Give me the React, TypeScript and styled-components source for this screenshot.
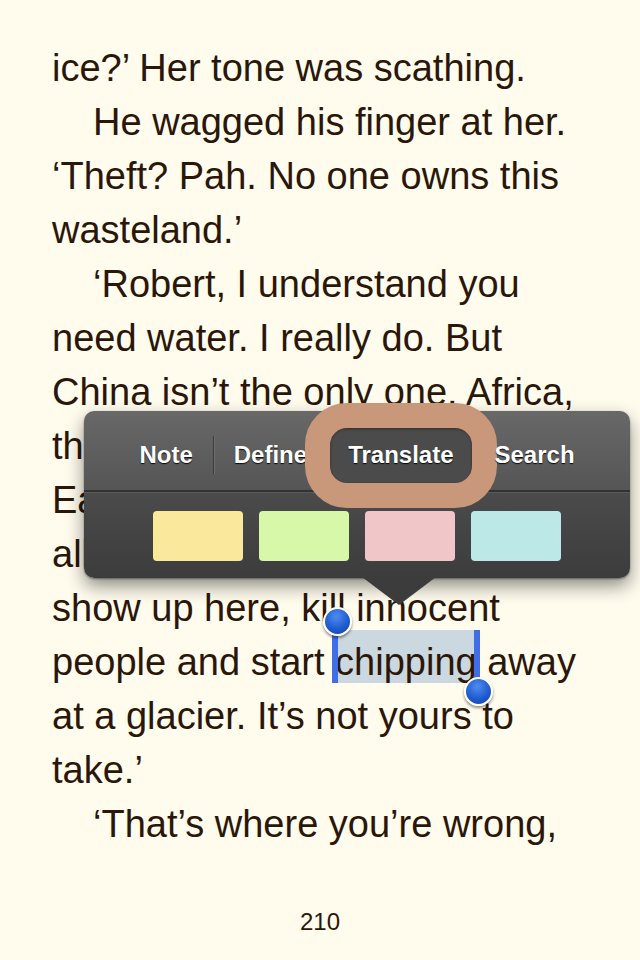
import React from "react";
import styled, { createGlobalStyle } from "styled-components";

const lines = [
    { text: "ice?’ Her tone was scathing." },
    { text: "He wagged his finger at her.", indent: true },
    { text: "‘Theft? Pah. No one owns this" },
    { text: "wasteland.’" },
    { text: "‘Robert, I understand you", indent: true },
    { text: "need water. I really do. But" },
    { text: "China isn’t the only one. Africa," },
    { text: "the subcontinent, the Middle" },
    { text: "East. They all need water. They" },
    { text: "all don’t simply march in and" },
    { text: "show up here, kill innocent" },
    { text: "SELECTION" },
    { text: "at a glacier. It’s not yours to" },
    { text: "take.’" },
    { text: "‘That’s where you’re wrong,", indent: true },
];

const menu = ["Note", "Define", "Translate", "Search"];
const swatches = ["#fae89c", "#d6f8a8", "#f1c6c8", "#bde8e8"];

export default function App() {
    return (
        <>
            <GlobalStyle />
            <StyledPage>
                <StyledText>
                    {lines.map((line, i) =>
                        line.text === "SELECTION" ? (
                            <StyledLine key={i}>
                                people and start{" "}
                                <StyledSelected>
                                    <StyledCaret side="left" />
                                    chipping
                                    <StyledCaret side="right" />
                                </StyledSelected>{" "}
                                away
                            </StyledLine>
                        ) : (
                            <StyledLine key={i} indent={line.indent}>
                                {line.text}
                            </StyledLine>
                        )
                    )}
                </StyledText>

                <StyledPageNumber>210</StyledPageNumber>

                <StyledPopover>
                    <StyledMenuRow>
                        {menu.map((item, i) => (
                            <React.Fragment key={item}>
                                {i > 0 && <StyledSeparator />}
                                <StyledMenuItem active={item === "Translate"}>
                                    {item}
                                    {item === "Translate" && <StyledRing />}
                                </StyledMenuItem>
                            </React.Fragment>
                        ))}
                    </StyledMenuRow>
                    <StyledSwatchRow>
                        {swatches.map(c => (
                            <StyledSwatch key={c} color={c} />
                        ))}
                    </StyledSwatchRow>
                </StyledPopover>
            </StyledPage>
        </>
    );
}

const GlobalStyle = createGlobalStyle`
    html, body {
        margin: 0;
        padding: 0;
        background: #fffcee;
    }
    * {
        box-sizing: border-box;
    }
`;

const StyledPage = styled.div`
    position: relative;
    width: 640px;
    height: 960px;
    display: flex;
    flex-direction: column;
    background: #fffcee;
    color: #2b1709;
    font-family: "Liberation Sans", Arial, sans-serif;
    overflow: hidden;
`;

const StyledText = styled.div`
    padding: 41px 0 0 52px;
    font-size: 38px;
    line-height: 54px;
`;

const StyledLine = styled.div<{ indent?: boolean }>`
    white-space: nowrap;
    padding-left: ${p => (p.indent ? "41px" : "0")};
`;

const StyledSelected = styled.span`
    position: relative;
    background: #cbd8df;
    padding-top: 11px;
`;

const StyledCaret = styled.span<{ side: "left" | "right" }>`
    position: absolute;
    top: 0;
    bottom: 0;
    width: 6px;
    background: #3f6ee6;
    ${p => (p.side === "left" ? "left: -3px;" : "right: -3px;")}

    &::after {
        content: "";
        position: absolute;
        left: 50%;
        width: 25px;
        height: 25px;
        margin-left: -12.5px;
        border-radius: 50%;
        border: 2px solid #fff;
        background: radial-gradient(circle at 45% 30%, #4f8cf0 0%, #1f5cd0 55%, #1240a8 100%);
        box-shadow: 0 2px 3px rgba(0, 0, 0, 0.45);
        ${p => (p.side === "left" ? "top: -23px;" : "bottom: -23px;")}
    }
`;

const StyledPageNumber = styled.div`
    margin-top: auto;
    padding-bottom: 26px;
    text-align: center;
    font-size: 24px;
    line-height: 24px;
`;

const StyledPopover = styled.div`
    position: absolute;
    left: 84px;
    top: 411px;
    width: 546px;
    height: 167px;
    border-radius: 10px;
    background: linear-gradient(#686868 0%, #555555 48%, #4b4b4b 49%, #3c3c3c 100%);
    box-shadow: 0 8px 18px rgba(0, 0, 0, 0.45), 0 1px 2px rgba(0, 0, 0, 0.4);
    font-family: "Liberation Sans", Arial, sans-serif;

    &::after {
        content: "";
        position: absolute;
        left: 278px;
        top: 166px;
        border-left: 37px solid transparent;
        border-right: 37px solid transparent;
        border-top: 28px solid #3c3c3c;
    }
`;

const StyledMenuRow = styled.div`
    display: flex;
    justify-content: center;
    align-items: center;
    height: 81px;
    padding-top: 9px;
    border-bottom: 2px solid #323232;
    box-shadow: 0 1px 0 #5a5a5a;
`;

const StyledSeparator = styled.div`
    width: 1px;
    height: 38px;
    margin: 0 2px;
    background: #3c3c3c;
    box-shadow: 1px 0 0 #6e6e6e;
`;

const StyledMenuItem = styled.div<{ active?: boolean }>`
    position: relative;
    height: 55px;
    display: flex;
    align-items: center;
    padding: 0 18px;
    border-radius: 15px;
    color: #ffffff;
    font-size: 24px;
    font-weight: bold;
    text-shadow: 0 1px 1px rgba(0, 0, 0, 0.9);
    background: ${p => (p.active ? "#4b4b4b" : "transparent")};
    box-shadow: ${p => (p.active ? "inset 0 1px 3px rgba(0, 0, 0, 0.4)" : "none")};
`;

const StyledRing = styled.span`
    position: absolute;
    inset: -25px;
    border: 25px solid #c9977a;
    border-radius: 42px;
    pointer-events: none;
`;

const StyledSwatchRow = styled.div`
    display: flex;
    justify-content: center;
    gap: 16px;
    padding-top: 19px;
`;

const StyledSwatch = styled.div<{ color: string }>`
    width: 90px;
    height: 50px;
    border-radius: 4px;
    background: ${p => p.color};
`;
